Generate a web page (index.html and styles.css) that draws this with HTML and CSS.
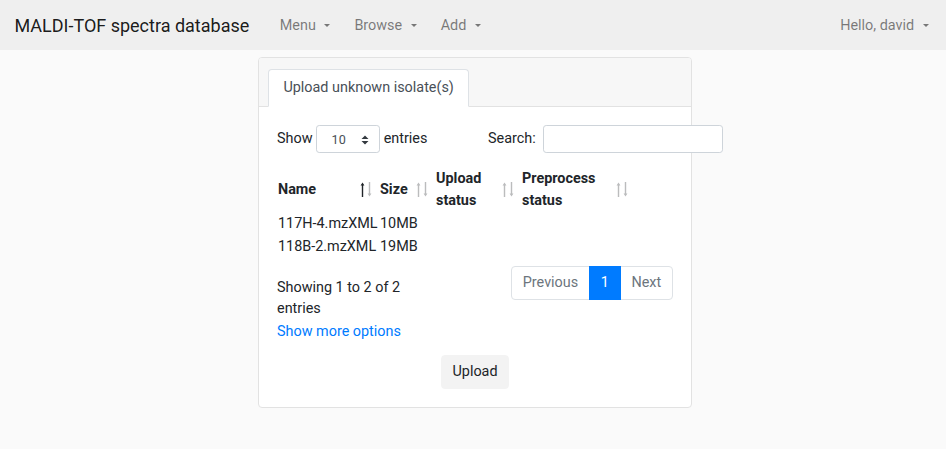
FILE: index.html
```html
<!DOCTYPE html>
<html lang="en">
<head>
<meta charset="utf-8">
<title>MALDI-TOF spectra database</title>
<link rel="stylesheet" href="styles.css">
</head>
<body>
<nav class="navbar">
  <a class="brand" href="#">MALDI-TOF spectra database</a>
  <ul class="nav-left">
    <li><a class="nav-link dropdown" href="#">Menu</a></li>
    <li><a class="nav-link dropdown" href="#">Browse</a></li>
    <li><a class="nav-link dropdown" href="#">Add</a></li>
  </ul>
  <div class="nav-right">
    <a class="nav-link user dropdown" href="#">Hello, david</a>
  </div>
</nav>
<main class="page">
  <div class="card">
    <div class="card-header">
      <ul class="tabs">
        <li class="tab active">Upload unknown isolate(s)</li>
      </ul>
    </div>
    <div class="card-body">
      <div class="dt-top">
        <div class="dt-length">
          <span>Show</span>
          <span class="select">
            <span class="select-value">10</span>
            <svg class="select-arrows" width="8" height="10" viewBox="0 0 8 10"><path d="M4 0.5 L7.5 4 L0.5 4 Z M4 9.5 L7.5 6 L0.5 6 Z" fill="#343a40"/></svg>
          </span>
          <span>entries</span>
        </div>
        <div class="dt-filter">
          <span>Search:</span>
          <input class="search-input" type="search">
        </div>
      </div>
      <table class="dt-table">
        <thead>
          <tr>
            <th class="col-name sort asc">Name<svg class="sort-icon" width="12" height="15" viewBox="0 0 12 15"><g class="up"><path d="M2.5 2 V15" stroke-width="1.4"/><path d="M0.6 3.6 L2.5 0.4 L4.4 3.6 Z" stroke="none"/></g><g class="down"><path d="M9.5 0 V13" stroke-width="1.4"/><path d="M7.6 11.4 L9.5 14.6 L11.4 11.4 Z" stroke="none"/></g></svg></th>
            <th class="col-size sort">Size<svg class="sort-icon" width="12" height="15" viewBox="0 0 12 15"><g class="up"><path d="M2.5 2 V15" stroke-width="1.4"/><path d="M0.6 3.6 L2.5 0.4 L4.4 3.6 Z" stroke="none"/></g><g class="down"><path d="M9.5 0 V13" stroke-width="1.4"/><path d="M7.6 11.4 L9.5 14.6 L11.4 11.4 Z" stroke="none"/></g></svg></th>
            <th class="col-upload sort">Upload status<svg class="sort-icon" width="12" height="15" viewBox="0 0 12 15"><g class="up"><path d="M2.5 2 V15" stroke-width="1.4"/><path d="M0.6 3.6 L2.5 0.4 L4.4 3.6 Z" stroke="none"/></g><g class="down"><path d="M9.5 0 V13" stroke-width="1.4"/><path d="M7.6 11.4 L9.5 14.6 L11.4 11.4 Z" stroke="none"/></g></svg></th>
            <th class="col-pre sort">Preprocess status<svg class="sort-icon" width="12" height="15" viewBox="0 0 12 15"><g class="up"><path d="M2.5 2 V15" stroke-width="1.4"/><path d="M0.6 3.6 L2.5 0.4 L4.4 3.6 Z" stroke="none"/></g><g class="down"><path d="M9.5 0 V13" stroke-width="1.4"/><path d="M7.6 11.4 L9.5 14.6 L11.4 11.4 Z" stroke="none"/></g></svg></th>
          </tr>
        </thead>
        <tbody>
          <tr><td>117H-4.mzXML</td><td>10MB</td><td></td><td></td></tr>
          <tr><td>118B-2.mzXML</td><td>19MB</td><td></td><td></td></tr>
        </tbody>
      </table>
      <div class="dt-bottom">
        <div class="dt-info">Showing 1 to 2 of 2 entries</div>
        <div class="dt-paginate">
          <ul class="pagination">
            <li class="page-item disabled"><span class="page-link">Previous</span></li>
            <li class="page-item active"><span class="page-link">1</span></li>
            <li class="page-item disabled"><span class="page-link">Next</span></li>
          </ul>
        </div>
      </div>
      <a class="more-link" href="#">Show more options</a>
      <div class="actions">
        <button class="btn" type="button">Upload</button>
      </div>
    </div>
  </div>
</main>
</body>
</html>
```

FILE: styles.css
```css
* { box-sizing: border-box; }

html, body {
  margin: 0;
  padding: 0;
}

body {
  background: #fafafa;
  font-family: Roboto, "Liberation Sans", Arial, sans-serif;
  font-size: 14.4px;
  line-height: 1.5;
  color: #212529;
}

a { text-decoration: none; }

/* Navbar */
.navbar {
  height: 50px;
  background: #efefef;
  display: flex;
  align-items: center;
  padding: 1px 14.4px 0;
}

.brand {
  font-size: 18px;
  line-height: 27px;
  color: rgba(0, 0, 0, 0.9);
  margin-right: 18.5px;
}

.nav-left {
  list-style: none;
  margin: 0;
  padding: 0;
  display: flex;
}

.nav-link {
  display: block;
  color: rgba(0, 0, 0, 0.5);
  padding: 0 12px;
  line-height: 21.6px;
}

.nav-right {
  margin-left: auto;
}

.nav-link.user {
  padding: 0 3px 0 12px;
}

.dropdown::after {
  content: "";
  display: inline-block;
  margin-left: 8.5px;
  vertical-align: 3px;
  border-top: 3.6px solid;
  border-right: 3.6px solid transparent;
  border-left: 3.6px solid transparent;
  border-bottom: 0;
}

/* Page */
.page {
  display: flex;
  justify-content: center;
  padding-left: 4px;
  padding-top: 7px;
}

.card {
  width: 434px;
  background: #fff;
  border: 1px solid #e2e2e2;
  border-radius: 4px;
}

.card-header {
  background: #f7f7f7;
  border-bottom: 1px solid #e2e2e2;
  border-radius: 3px 3px 0 0;
  padding: 11.3px 18px 0 9px;
}

.tabs {
  list-style: none;
  margin: 0;
  padding: 0;
  display: flex;
}

.tab {
  padding: 7.2px 14.4px;
  line-height: 21.6px;
  border: 1px solid #dee2e6;
  border-bottom-color: #fff;
  border-radius: 4px 4px 0 0;
  background: #fff;
  color: #495057;
  margin-bottom: -1px;
}

.card-body {
  padding: 18px 18px 18px 18px;
}

/* DataTables top row */
.dt-top {
  display: grid;
  grid-template-columns: 183px 183px;
  column-gap: 28px;
  height: 28px;
}

.dt-length {
  display: flex;
  align-items: center;
  gap: 3.6px;
  white-space: nowrap;
}

.select {
  display: inline-flex;
  align-items: center;
  justify-content: space-between;
  width: 64px;
  height: 28px;
  border: 1px solid #ced4da;
  border-radius: 3.2px;
  background: #fff;
  padding: 2px 10px 0 14.5px;
  font-size: 12.6px;
  color: #495057;
}

.select-arrows {
  display: block;
  margin-top: -1px;
}

.dt-filter {
  display: flex;
  align-items: center;
  white-space: nowrap;
}

.search-input {
  margin: 0 0 0 7.2px;
  width: 180px;
  flex: none;
  height: 28px;
  border: 1px solid #ced4da;
  border-radius: 3.2px;
  background: #fff;
  padding: 0 7px;
  font: inherit;
}

/* Table */
.dt-table {
  border-collapse: collapse;
  margin-top: 14.5px;
  margin-bottom: 6px;
  table-layout: fixed;
  width: 358px;
}

.dt-table th {
  position: relative;
  text-align: left;
  vertical-align: middle;
  font-weight: 700;
  line-height: 22.2px;
  padding: 0 30px 0 1px;
}

.col-name { width: 102px; }
.col-size { width: 56px; }
.col-upload { width: 86px; }
.col-pre { width: 114px; }

.sort-icon {
  position: absolute;
  right: 7px;
  top: 50%;
  margin-top: -8px;
}

.sort-icon g {
  fill: #212529;
  stroke: #212529;
  opacity: 0.3;
}

.sort.asc .sort-icon .up {
  opacity: 1;
}

.dt-table td {
  padding: 0.9px 1px 0.7px;
  line-height: 21.6px;
  white-space: nowrap;
}

/* Bottom row */
.dt-bottom {
  display: grid;
  grid-template-columns: 147px 1fr;
  column-gap: 30px;
}

.dt-info {
  padding-top: 12.2px;
  line-height: 21.6px;
}

.dt-paginate {
  display: flex;
  justify-content: flex-end;
  align-items: flex-start;
}

.pagination {
  list-style: none;
  display: flex;
  margin: 1.5px 0 0;
  padding: 0;
}

.page-link {
  display: block;
  padding: 7.2px 10.8px;
  line-height: 18px;
  border: 1px solid #dee2e6;
  margin-left: -1px;
  background: #fff;
  color: #6c757d;
}

.page-item:first-child .page-link {
  margin-left: 0;
  border-radius: 4px 0 0 4px;
}

.page-item:last-child .page-link {
  border-radius: 0 4px 4px 0;
}

.page-item.active .page-link {
  background: #007bff;
  border-color: #007bff;
  color: #fff;
  position: relative;
}

.more-link {
  display: block;
  color: #007bff;
  line-height: 21.6px;
  margin-top: 1px;
  width: max-content;
}

.actions {
  display: flex;
  justify-content: center;
  margin-top: 12.5px;
}

.btn {
  font: inherit;
  line-height: 21.6px;
  padding: 5.4px 10.8px;
  background: #f3f3f3;
  border: 1px solid #f3f3f3;
  border-radius: 4px;
  color: #212529;
}
```
